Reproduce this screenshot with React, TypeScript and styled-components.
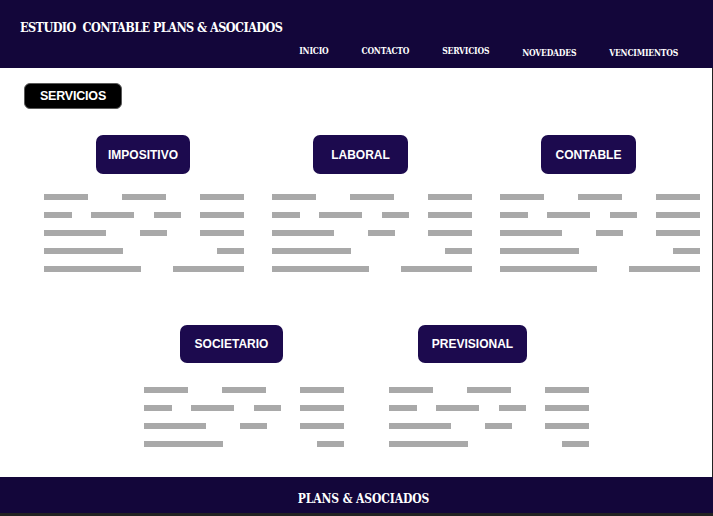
import React from "react";
import styled, { createGlobalStyle } from "styled-components";

const Global = createGlobalStyle`
  html, body { margin: 0; padding: 0; background: #ffffff; }
  body { width: 713px; height: 516px; overflow: hidden; }
  * { box-sizing: border-box; }
`;

const Page = styled.div`
  width: 713px;
  height: 516px;
  display: flex;
  flex-direction: column;
`;

const Header = styled.header`
  height: 68px;
  flex: none;
  background: #13063a;
  display: flex;
  flex-direction: column;
  padding: 18px 35px 0 20px;
`;

const Title = styled.h1`
  margin: 0;
  font-family: "DejaVu Serif Condensed", "DejaVu Serif", serif;
  font-weight: bold;
  font-size: 12.5px;
  letter-spacing: -0.55px;
  line-height: 20px;
  color: #ffffff;
  white-space: pre;
`;

const Nav = styled.nav`
  display: flex;
  justify-content: flex-end;
  gap: 33px;
  margin-top: 7px;
`;

const NavItem = styled.span<{ $low?: boolean }>`
  font-family: "DejaVu Serif Condensed", "DejaVu Serif", serif;
  font-weight: bold;
  font-size: 8.5px;
  letter-spacing: -0.2px;
  line-height: 12px;
  color: #ffffff;
  padding-top: ${(p) => (p.$low ? "2px" : "0")};
`;

const Main = styled.main`
  flex: 1;
  border-right: 1px solid #222222;
  padding: 15px 0 0 24px;
  display: flex;
  flex-direction: column;
`;

const SectionButton = styled.div`
  width: 98px;
  height: 26px;
  background: #000000;
  border: 1px solid #5a5a5a;
  border-radius: 6px;
  color: #ffffff;
  font-family: "Liberation Sans", Arial, sans-serif;
  font-weight: bold;
  font-size: 12.5px;
  letter-spacing: -0.2px;
  display: flex;
  align-items: center;
  justify-content: center;
`;

const CardRow = styled.div<{ $top: number; $left: number; $gap: number }>`
  display: flex;
  gap: ${(p) => p.$gap}px;
  margin-top: ${(p) => p.$top}px;
  margin-left: ${(p) => p.$left}px;
`;

const Card = styled.div`
  width: 200px;
  display: flex;
  flex-direction: column;
  align-items: flex-start;
`;

const CardButton = styled.div<{ $w: number; $h: number; $offset: number }>`
  width: ${(p) => p.$w}px;
  height: ${(p) => p.$h}px;
  margin-left: ${(p) => p.$offset}px;
  background: #1c0a4e;
  border-radius: 7px;
  color: #ffffff;
  font-family: "Liberation Sans", Arial, sans-serif;
  font-weight: bold;
  font-size: 12px;
  display: flex;
  align-items: center;
  justify-content: center;
`;

const Lines = styled.div<{ $space: number }>`
  margin-top: ${(p) => p.$space}px;
  width: 200px;
  display: flex;
  flex-direction: column;
  gap: 12px;
`;

const Line = styled.div`
  display: flex;
  justify-content: space-between;
  height: 6px;
`;

const Word = styled.span<{ $w: number }>`
  width: ${(p) => p.$w}px;
  height: 6px;
  background: #a9a9a9;
`;

const Footer = styled.footer`
  height: 39px;
  flex: none;
  background: #13063a;
  border-bottom: 3px solid #222222;
  display: flex;
  align-items: center;
  justify-content: center;
  padding-left: 14px;
  padding-top: 8px;
  font-family: "DejaVu Serif Condensed", "DejaVu Serif", serif;
  font-weight: bold;
  font-size: 12px;
  letter-spacing: -0.1px;
  color: #ffffff;
`;

const pattern: number[][] = [
  [44, 44, 44],
  [28, 43, 27, 44],
  [62, 27, 44],
  [79, 27],
  [97, 71],
];

const Text = ({ rows, space }: { rows: number; space: number }) => (
  <Lines $space={space}>
    {pattern.slice(0, rows).map((line, i) => (
      <Line key={i}>
        {line.map((w, j) => (
          <Word key={j} $w={w} />
        ))}
      </Line>
    ))}
  </Lines>
);

export default function App() {
  return (
    <Page>
      <Global />
      <Header>
        <Title>{"ESTUDIO  CONTABLE PLANS & ASOCIADOS"}</Title>
        <Nav>
          <NavItem>INICIO</NavItem>
          <NavItem>CONTACTO</NavItem>
          <NavItem>SERVICIOS</NavItem>
          <NavItem $low>NOVEDADES</NavItem>
          <NavItem $low>VENCIMIENTOS</NavItem>
        </Nav>
      </Header>
      <Main>
        <SectionButton>SERVICIOS</SectionButton>
        <CardRow $top={26} $left={20} $gap={28}>
          <Card>
            <CardButton $w={94} $h={39} $offset={52}>IMPOSITIVO</CardButton>
            <Text rows={5} space={20} />
          </Card>
          <Card>
            <CardButton $w={95} $h={39} $offset={41}>LABORAL</CardButton>
            <Text rows={5} space={20} />
          </Card>
          <Card>
            <CardButton $w={95} $h={39} $offset={41}>CONTABLE</CardButton>
            <Text rows={5} space={20} />
          </Card>
        </CardRow>
        <CardRow $top={53} $left={120} $gap={45}>
          <Card>
            <CardButton $w={103} $h={38} $offset={36}>SOCIETARIO</CardButton>
            <Text rows={4} space={24} />
          </Card>
          <Card>
            <CardButton $w={109} $h={38} $offset={29}>PREVISIONAL</CardButton>
            <Text rows={4} space={24} />
          </Card>
        </CardRow>
      </Main>
      <Footer>PLANS &amp; ASOCIADOS</Footer>
    </Page>
  );
}
